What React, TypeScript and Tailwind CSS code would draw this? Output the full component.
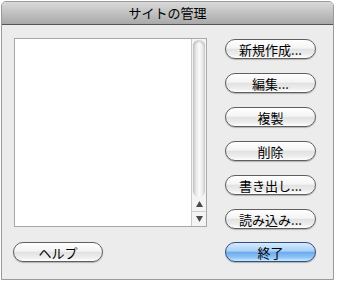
import React from 'react'

const font = { fontFamily: '"Noto Sans CJK JP", "Noto Sans", sans-serif' }

function AquaButton({ label, primary = false, className = '' }: { label: string; primary?: boolean; className?: string }) {
  const skin = primary
    ? 'border-[#2f4f86] bg-[linear-gradient(to_bottom,#d6ebfd_0%,#a7d0f6_45%,#6eaaee_52%,#8fc4f5_80%,#c8ecff_100%)]'
    : 'border-[#5f5f5f] bg-[linear-gradient(to_bottom,#ffffff_0%,#f4f4f4_45%,#e2e2e2_52%,#ededed_80%,#ffffff_100%)]'
  return (
    <button
      className={`h-[20px] rounded-full border text-[13px] leading-none text-black shadow-[0_1px_1px_rgba(0,0,0,0.25)] ${skin} ${className}`}
    >
      {label}
    </button>
  )
}

function Scrollbar() {
  return (
    <div className="flex h-full w-[15px] flex-col border-l border-[#c8c8c8] bg-[#f4f4f4]">
      {/* track */}
      <div className="flex-1 px-[1px] pt-[1px]">
        <div className="h-full rounded-full bg-[linear-gradient(to_right,#c9c9c9_0%,#ececec_30%,#fbfbfb_55%,#e4e4e4_85%,#cfcfcf_100%)] shadow-[inset_0_2px_2px_rgba(0,0,0,0.15)]" />
      </div>
      {/* arrows */}
      <div className="flex h-[15px] items-center justify-center border-b border-[#d0d0d0]">
        <svg width="7" height="6" viewBox="0 0 7 6"><path d="M3.5 0L7 6H0z" fill="#4a4a4a" /></svg>
      </div>
      <div className="flex h-[14px] items-center justify-center">
        <svg width="7" height="6" viewBox="0 0 7 6"><path d="M0 0h7L3.5 6z" fill="#4a4a4a" /></svg>
      </div>
    </div>
  )
}

export default function App() {
  const actions = ['新規作成...', '編集...', '複製', '削除', '書き出し...', '読み込み...']
  return (
    <div className="h-[284px] w-[337px] bg-white pl-[1px] pt-[1px]" style={font}>
      <div className="flex h-[279px] w-[333px] flex-col overflow-hidden rounded-t-[5px] border border-[#9a9a9a] bg-[#ececec]">
        {/* title bar */}
        <div className="flex h-[23px] shrink-0 items-center justify-center border-b border-[#555] bg-[linear-gradient(to_bottom,#d9d9d9,#a9a9a9)] text-[13px] text-black">
          サイトの管理
        </div>

        <div className="flex flex-1 pl-[12px] pt-[13px]">
          {/* left column */}
          <div className="flex w-[193px] flex-col">
            <div className="flex h-[189px] border border-[#a8a8a8] bg-white">
              <div className="flex-1" />
              <Scrollbar />
            </div>
            <AquaButton label="ヘルプ" className="mt-[15px] ml-[-1px] w-[90px]" />
          </div>

          {/* right column */}
          <div className="ml-[18px] flex w-[91px] flex-col gap-[14px] pt-[1px]">
            {actions.map((a) => (
              <AquaButton key={a} label={a} className="w-full" />
            ))}
            <AquaButton label="終了" primary className="mt-[-1px] w-full" />
          </div>
        </div>
      </div>
    </div>
  )
}
